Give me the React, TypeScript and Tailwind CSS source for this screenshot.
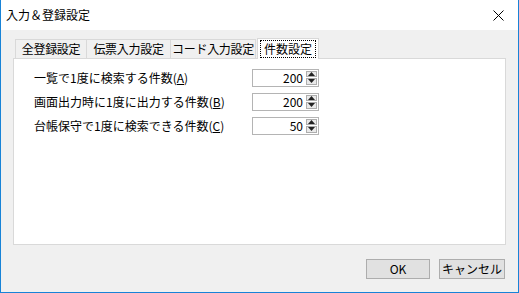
import React from "react";

const font = { fontFamily: '"MS UI Gothic", "Noto Sans CJK JP", sans-serif' };

const tabs = [
  { label: "全登録設定", w: "w-[72px]" },
  { label: "伝票入力設定", w: "w-[85px]" },
  { label: "コード入力設定", w: "w-[86px]" },
];

const rows = [
  { label: "一覧で1度に検索する件数", key: "A", value: "200" },
  { label: "画面出力時に1度に出力する件数", key: "B", value: "200" },
  { label: "台帳保守で1度に検索できる件数", key: "C", value: "50" },
];

const Spinner: React.FC = () => (
  <div className="flex flex-col w-[14px] h-[18px] border border-l-0 border-[#b4b4b4] bg-white p-[1px] gap-px">
    <div className="flex-1 bg-[#e9e9e9] border border-[#adadad] flex items-center justify-center">
      <svg width="7" height="4" viewBox="0 0 7 4"><path d="M0 4L3.5 0L7 4Z" fill="#222" /></svg>
    </div>
    <div className="flex-1 bg-[#e9e9e9] border border-[#adadad] flex items-center justify-center">
      <svg width="7" height="4" viewBox="0 0 7 4"><path d="M0 0L3.5 4L7 0Z" fill="#222" /></svg>
    </div>
  </div>
);

const App: React.FC = () => {
  return (
    <div
      className="w-[519px] h-[293px] flex flex-col bg-[#f0f0f0] border-x border-b border-[#1883d7] text-[12px] text-black overflow-hidden"
      style={font}
    >
      {/* Title bar */}
      <div className="h-[30px] flex-none bg-white flex items-center justify-between pl-[5px] pr-[14px]">
        <span className="text-[12px]">入力＆登録設定</span>
        <svg width="11" height="11" viewBox="0 0 11 11">
          <path d="M0.5 0.5L10.5 10.5M10.5 0.5L0.5 10.5" stroke="#000" strokeWidth="1" />
        </svg>
      </div>

      {/* Tabs */}
      <div className="flex flex-col px-[12px] pt-[7px]">
        <div className="flex items-end pl-[2px] h-[21px]">
          {tabs.map((t) => (
            <div
              key={t.label}
              className={`${t.w} h-[19px] flex items-center justify-center border border-b-0 border-[#d9d9d9] -mr-px bg-[#f0f0f0] text-[12px] leading-none whitespace-nowrap tracking-[-0.3px]`}
            >
              {t.label}
            </div>
          ))}
          <div className="h-[21px] ml-[2px] px-[2px] flex items-center border border-b-0 border-[#d9d9d9] bg-white text-[12px] leading-none relative z-10 -mb-px">
            <span className="border border-dotted border-black px-[3px] py-[2px]">件数設定</span>
          </div>
        </div>

        {/* Panel */}
        <div className="h-[187px] bg-white border border-[#d9d9d9] flex flex-col pt-[9px] pl-[20px] gap-[5px]">
          {rows.map((r) => (
            <div key={r.key} className="flex items-center h-[19px]">
              <span className="w-[218px] text-[12px] whitespace-nowrap">
                {r.label}(<span className="underline">{r.key}</span>)
              </span>
              <div className="flex">
                <div className="w-[53px] h-[18px] border border-r-0 border-[#b4b4b4] flex items-center justify-end pr-[2px] text-[12px]">
                  {r.value}
                </div>
                <Spinner />
              </div>
            </div>
          ))}
        </div>
      </div>

      {/* Buttons */}
      <div className="flex justify-end gap-[9px] pr-[13px] pt-[14px]">
        <button className="w-[64px] h-[20px] bg-[#e1e1e1] border border-[#adadad] text-[12px] leading-none whitespace-nowrap">OK</button>
        <button className="w-[66px] h-[20px] bg-[#e1e1e1] border border-[#adadad] text-[12px] leading-none whitespace-nowrap">キャンセル</button>
      </div>
    </div>
  );
};

export default App;
